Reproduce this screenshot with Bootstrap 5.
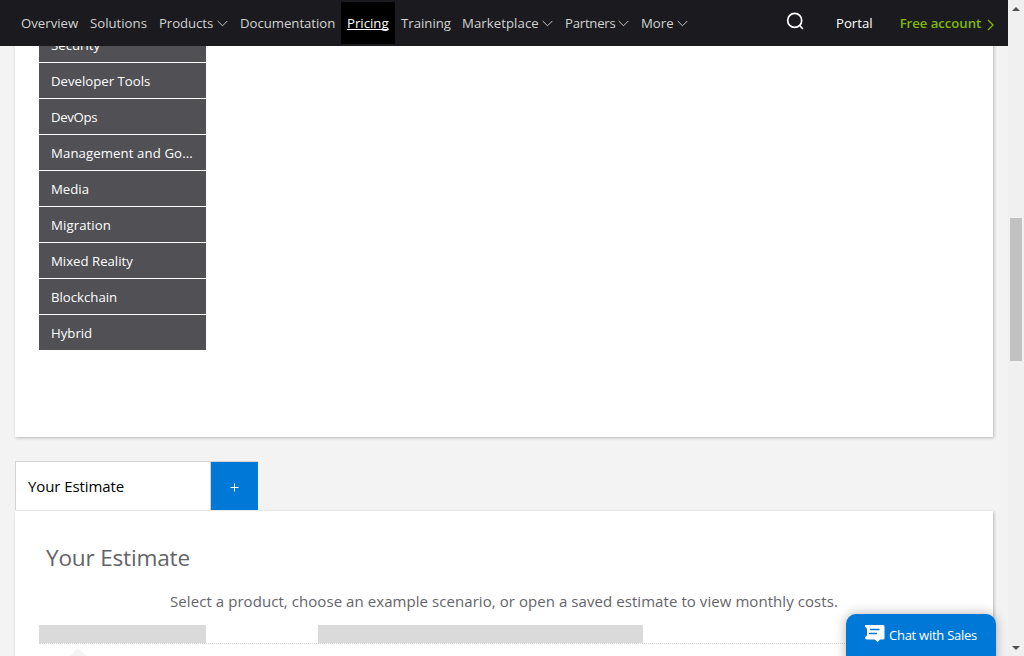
<!DOCTYPE html>
<html lang="en">
<head>
<meta charset="utf-8">
<meta name="viewport" content="width=device-width, initial-scale=1">
<title>Pricing Calculator</title>
<link rel="stylesheet" href="https://cdn.jsdelivr.net/npm/bootstrap@5.3.0/dist/css/bootstrap.min.css">
<style>
  body { font-family: "Segoe UI", "Open Sans", "Noto Sans", sans-serif; background: #f3f3f3; height: 656px; }
  .page-view { width: 1008px; height: 656px; }
  .site-nav { height: 46px; background: #1b1b1f; padding: 2px 0 2px 15px; font-size: 13.2px; z-index: 20; }
  .site-nav .nav-link { height: 42px; padding: 0 6px; color: #d2d2d2; line-height: 42px; white-space: nowrap; display: flex; align-items: center; }
  .site-nav .nav-link.active { background: #000; color: #fff; text-decoration: underline; text-underline-offset: 1px; text-decoration-skip-ink: none; }
  .chev { width: 11px; height: 7px; margin-left: auto; flex: none; }
  .w-over, .w-sol { width: 69px; } .w-prod { width: 81px; letter-spacing: -.06px; } .w-doc { width: 107px; letter-spacing: -.03px; }
  .w-price { width: 54px; } .w-train { width: 61px; } .w-market { width: 103px; letter-spacing: .06px; }
  .w-part { width: 76px; letter-spacing: -.25px; } .w-more { width: 59px; }
  .nav-tools { height: 42px; width: 222px; }
  .site-nav .portal { margin-left: 26px; }
  .site-nav .free { margin-left: 16px; color: #7fba00; font-weight: 600; letter-spacing: -.05px; padding-left: 5px; }
  .sheet { background: #fff; width: 978px; margin-left: 15px; box-shadow: 1px 1px 3px rgba(0,0,0,.25); }
  .products-sheet { height: 437px; padding: 27px 0 0 24px; }
  .categories { width: 167px; font-size: 13.2px; }
  .category { height: 35px; line-height: 36px; margin-bottom: 1px; padding: 0 12px; background: #505055; color: #fff; white-space: nowrap; }
  .category.long { letter-spacing: .1px; }
  .category.short { letter-spacing: -.35px; }
  .tabs { margin: 24px 0 0 15px; height: 50px; position: relative; z-index: 1; }
  .tab-current { width: 196px; height: 49px; border: 1px solid #d2d2d2; border-bottom: 0; background: #fff; color: #000; font-size: 15px; line-height: 49px; padding-left: 12px; letter-spacing: -.09px; }
  .tab-add { width: 47px; height: 49px; background: #0078d7; border-top: 1px solid #d2d2d2; color: #fff; }
  .estimate-sheet { height: 200px; padding: 30px 24px 0; color: #64646a; }
  .estimate-title { font-size: 22.6px; line-height: 34px; padding-left: 7px; margin: 0; font-weight: 400; letter-spacing: -.2px; }
  .estimate-hint { font-size: 15px; line-height: 24px; margin: 14px 0 12px; letter-spacing: .065px; }
  .rows { height: 19px; border-bottom: 1px dotted #d6d6d6; }
  .block-a { width: 167px; height: 18px; background: #dadada; margin-right: 112px; }
  .block-b { width: 325px; height: 18px; background: #dadada; }
  .pointer { width: 24px; height: 12px; margin: 4px 0 0 27px; background: #f4f4f4; clip-path: polygon(50% 0, 100% 100%, 0 100%); }
  .chat { left: 846px; top: 614px; width: 150px; height: 50px; border-radius: 10px 10px 0 0; background: #0078d7; color: #fff; box-shadow: 0 0 12px rgba(0,0,0,.3); font-size: 13px; padding: 11px 0 0 19px; z-index: 10; }
  .chat-label { margin-left: 4px; letter-spacing: -.26px; line-height: 21px; white-space: nowrap; }
  .scroll-track { width: 16px; height: 656px; background: #f0f0f0; padding: 7px 2px 6px; }
  .scroll-thumb { width: 12px; height: 143px; margin-top: 207px; background: #c1c1c1; }
</style>
</head>
<body class="d-flex overflow-hidden">
<div class="page-view position-relative overflow-hidden">
  <nav class="site-nav position-absolute top-0 start-0 w-100 d-flex align-items-start">
    <a class="nav-link w-over">Overview</a>
    <a class="nav-link w-sol">Solutions</a>
    <a class="nav-link w-prod">Products<svg class="chev" viewBox="0 0 11 7" fill="none" stroke="#c8c8c8"><path d="M.7 1 5.5 5.8 10.3 1"/></svg></a>
    <a class="nav-link w-doc">Documentation</a>
    <a class="nav-link w-price active">Pricing</a>
    <a class="nav-link w-train">Training</a>
    <a class="nav-link w-market">Marketplace<svg class="chev" viewBox="0 0 11 7" fill="none" stroke="#c8c8c8"><path d="M.7 1 5.5 5.8 10.3 1"/></svg></a>
    <a class="nav-link w-part">Partners<svg class="chev" viewBox="0 0 11 7" fill="none" stroke="#c8c8c8"><path d="M.7 1 5.5 5.8 10.3 1"/></svg></a>
    <a class="nav-link w-more">More<svg class="chev" viewBox="0 0 11 7" fill="none" stroke="#c8c8c8"><path d="M.7 1 5.5 5.8 10.3 1"/></svg></a>
    <div class="nav-tools d-flex align-items-center ms-auto">
      <svg width="18" height="19" viewBox="0 0 18 19" fill="none" stroke="#fff" stroke-width="1.7" class="flex-shrink-0 mb-1"><circle cx="8.700" cy="8.400" r="7"/><path d="m13.500 13.200 3.400 3.800"/></svg>
      <a class="nav-link text-white portal">Portal</a>
      <a class="nav-link free">Free account</a>
      <svg width="7" height="12" viewBox="0 0 7 12" fill="none" stroke="#7fba00" stroke-width="1.3" class="mt-1"><path d="M1 1l5 5-5 5"/></svg>
    </div>
  </nav>

  <section class="sheet products-sheet">
    <div class="categories">
      <div class="category">Security</div>
      <div class="category">Developer Tools</div>
      <div class="category short">DevOps</div>
      <div class="category long">Management and Go...</div>
      <div class="category">Media</div>
      <div class="category long">Migration</div>
      <div class="category">Mixed Reality</div>
      <div class="category">Blockchain</div>
      <div class="category">Hybrid</div>
    </div>
  </section>

  <div class="tabs d-flex">
    <div class="tab-current">Your Estimate</div>
    <div class="tab-add d-flex align-items-center justify-content-center">
      <svg width="9" height="9" stroke="#fff" style="margin-top:2px"><path d="M4.5 .5v8M.5 4.5h8"/></svg>
    </div>
  </div>
  <section class="sheet estimate-sheet">
    <h2 class="estimate-title">Your Estimate</h2>
    <p class="estimate-hint text-center">Select a product, choose an example scenario, or open a saved estimate to view monthly costs.</p>
    <div class="rows d-flex"><div class="block-a"></div><div class="block-b"></div></div>
    <div class="pointer"></div>
  </section>

  <div class="chat position-absolute d-flex align-items-start">
    <svg width="20" height="18" viewBox="0 0 20 18" class="flex-shrink-0"><path fill="#fff" d="M1 0h17q1.500 0 1.500 1.500v11.500q0 1.500-1.500 1.500h-3L12.800 17l-3-2.500H2Q0 14.500 0 12.500l2-2V4L0 1.500V0z"/><path d="M5 4.500h9.500M4 8.500h8" stroke="#0078d7" stroke-width="1.500"/></svg>
    <span class="chat-label">Chat with Sales</span>
  </div>
</div>
<div class="scroll-track d-flex flex-column align-items-center">
  <svg width="8" height="4"><path fill="#505050" d="M4 0l4 4H0z"/></svg>
  <div class="scroll-thumb"></div>
  <svg width="8" height="4" class="mt-auto"><path fill="#505050" d="M0 0h8L4 4z"/></svg>
</div>
<script src="https://cdn.jsdelivr.net/npm/bootstrap@5.3.0/dist/js/bootstrap.bundle.min.js"></script>
</body>
</html>
